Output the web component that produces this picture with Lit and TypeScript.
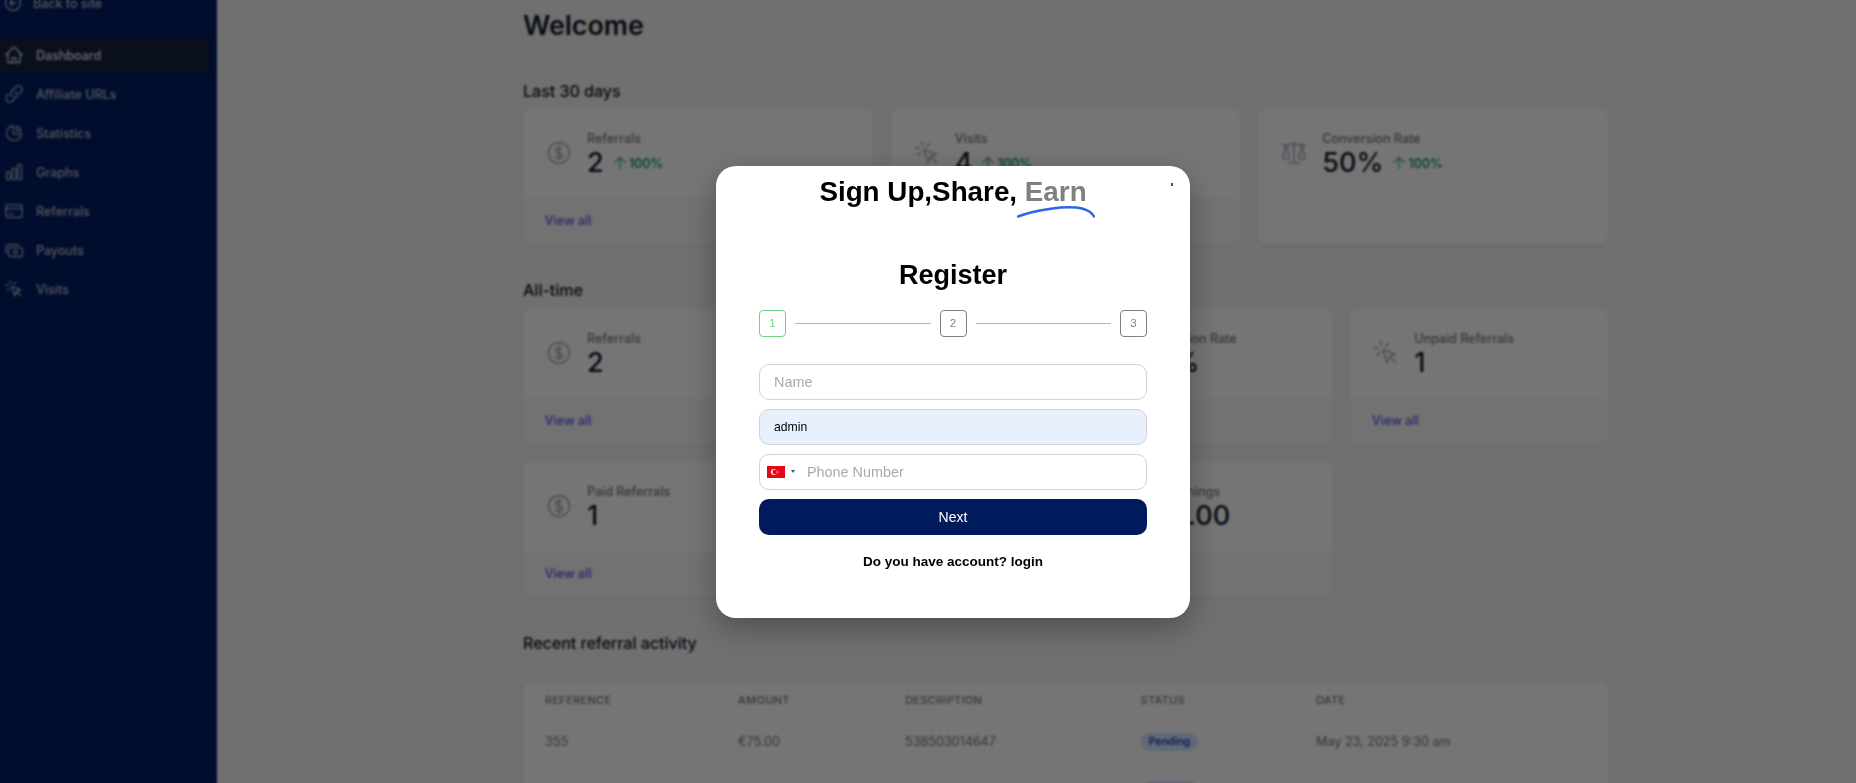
import { LitElement, html, css, svg } from "lit";
import { customElement } from "lit/decorators.js";

const ICONS: Record<string, string> = {
  back: "M11.25 9l-3 3m0 0l3 3m-3-3h7.5M21 12a9 9 0 11-18 0 9 9 0 0118 0z",
  home: "M2.25 12l8.954-8.955c.44-.439 1.152-.439 1.591 0L21.75 12M4.5 9.75v10.125c0 .621.504 1.125 1.125 1.125H9.75v-4.875c0-.621.504-1.125 1.125-1.125h2.25c.621 0 1.125.504 1.125 1.125V21h4.125c.621 0 1.125-.504 1.125-1.125V9.75M8.25 21h8.25",
  link: "M13.19 8.688a4.5 4.5 0 011.242 7.244l-4.5 4.5a4.5 4.5 0 01-6.364-6.364l1.757-1.757m13.35-.622l1.757-1.757a4.5 4.5 0 00-6.364-6.364l-4.5 4.5a4.5 4.5 0 001.242 7.244",
  pie: "M11 3.055A9.001 9.001 0 1020.945 13H11V3.055zM20.488 9H15V3.512A9.025 9.025 0 0120.488 9z",
  bars: "M3 13.125C3 12.504 3.504 12 4.125 12h2.25c.621 0 1.125.504 1.125 1.125v6.75C7.5 20.496 6.996 21 6.375 21h-2.25A1.125 1.125 0 013 19.875v-6.75zM9.75 8.625c0-.621.504-1.125 1.125-1.125h2.25c.621 0 1.125.504 1.125 1.125v11.25c0 .621-.504 1.125-1.125 1.125h-2.25a1.125 1.125 0 01-1.125-1.125V8.625zM16.5 4.125c0-.621.504-1.125 1.125-1.125h2.25C20.496 3 21 3.504 21 4.125v15.75c0 .621-.504 1.125-1.125 1.125h-2.25a1.125 1.125 0 01-1.125-1.125V4.125z",
  card: "M2.25 9h19.5M5.5 15.5h2m1.5 0h2M4.5 19.5h15a2.25 2.25 0 002.25-2.25V6.75A2.25 2.25 0 0019.5 4.5h-15a2.25 2.25 0 00-2.25 2.25v10.5A2.25 2.25 0 004.5 19.5z",
  payout: "M2.5 15.5V8A2.5 2.5 0 015 5.5h13M8 9h11.5A2.5 2.5 0 0122 11.5v6a2.5 2.5 0 01-2.5 2.5H8A2.5 2.5 0 015.5 17.5v-6A2.5 2.5 0 018 9zM16 14.5a2.2 2.2 0 11-4.4 0 2.2 2.2 0 014.4 0z",
  click: "M15 15l-2 5L9 9l11 4-5 2zm0 0l5 5M7.188 2.239l.777 2.897M5.136 7.965l-2.898-.777M13.95 4.05l-2.122 2.122m-5.657 5.656l-2.12 2.122",
  dollar: "M12 6v12m-3-2.818l.879.659c1.171.879 3.07.879 4.242 0 1.172-.879 1.172-2.303 0-3.182C13.536 12.219 12.768 12 12 12c-.725 0-1.45-.22-2.003-.659-1.106-.879-1.106-2.303 0-3.182s2.9-.879 4.006 0l.415.33M21 12a9 9 0 11-18 0 9 9 0 0118 0z",
  scale: "M12 3v17.25m0 0c-1.472 0-2.882.265-4.185.75M12 20.25c1.472 0 2.882.265 4.185.75M18.75 4.97A48.416 48.416 0 0012 4.5c-2.291 0-4.545.16-6.75.47m13.5 0c1.01.143 2.01.317 3 .52m-3-.52l2.62 10.726c.122.499-.106 1.028-.589 1.202a5.988 5.988 0 01-2.031.352 5.988 5.988 0 01-2.031-.352c-.483-.174-.711-.703-.59-1.202L18.75 4.97zm-16.5.52c.99-.203 1.99-.377 3-.52m0 0l2.62 10.726c.122.499-.106 1.028-.589 1.202a5.989 5.989 0 01-2.031.352 5.989 5.989 0 01-2.031-.352c-.483-.174-.711-.703-.59-1.202L5.25 4.97z",
  up: "M12 19.5v-15m0 0l-6.75 6.75M12 4.5l6.75 6.75",
};

const icon = (name: string, cls: string) => html`<svg class=${cls} viewBox="0 0 24 24" fill="none" stroke="currentColor" stroke-width="1.5" stroke-linecap="round" stroke-linejoin="round">${svg`<path d=${ICONS[name]}></path>`}</svg>`;

interface Stat { label: string; value?: string; icon?: string; trend?: boolean; footer?: boolean }

const NAV = [
  ["Dashboard", "home"], ["Affiliate URLs", "link"], ["Statistics", "pie"], ["Graphs", "bars"],
  ["Referrals", "card"], ["Payouts", "payout"], ["Visits", "click"],
];
const RECENT: Stat[] = [
  { label: "Referrals", value: "2", icon: "dollar", trend: true, footer: true },
  { label: "Visits", value: "4", icon: "click", trend: true, footer: true },
  { label: "Conversion Rate", value: "50%", icon: "scale", trend: true },
];
const ALL: Stat[] = [
  { label: "Referrals", value: "2", icon: "dollar", footer: true },
  { label: "Visits", value: "4", icon: "click", footer: true },
  { label: "Conversion Rate", value: "50%", icon: "scale", footer: true },
  { label: "Unpaid Referrals", value: "1", icon: "click", footer: true },
  { label: "Paid Referrals", value: "1", icon: "dollar", footer: true },
  { label: "", footer: true },
  { label: "Paid Earnings", value: "€75.00", icon: "dollar", footer: true },
];

@customElement("app-root")
export class AppRoot extends LitElement {
  static styles = css`
    :host { display: block; height: 100vh; overflow: hidden; font-family: Inter, "Noto Sans", sans-serif; position: relative; }
    * { box-sizing: border-box; }
    .shell { display: grid; grid-template-columns: 217px 1fr; height: 783px; overflow: hidden; background: #e0e0e0; }
    .side { background: #001a5b; font-size: 12.5px; font-weight: 500; }
    .back { display: flex; align-items: center; height: 20px; margin-top: -7px; padding-left: 3px; gap: 10px; color: #a8adb9; }
    .back-i { width: 20px; height: 20px; }
    .nav { margin-top: 24px; display: grid; grid-auto-rows: 36px; row-gap: 3px; width: 210px; }
    .item { display: flex; align-items: center; gap: 12px; padding-left: 4px; border-radius: 4px; color: #a8adb9; }
    .item.on { background: #141f3c; color: #d0d3d9; }
    .nav-i { width: 20px; height: 20px; flex: none; }
    .main { padding: 9px 248px 0 306px; color: #111827; }
    h1 { margin: 0; font-size: 26.8px; line-height: 32px; font-weight: 600; }
    .sec { font-size: 16px; line-height: 24px; font-weight: 500; margin: 0 0 6px; }
    .sec.a { margin-top: 38px; }
    .sec.b { margin-top: 34px; margin-bottom: 7px; }
    .sec.c { margin-top: 34px; margin-bottom: 28px; }
    .grid { display: grid; gap: 18px; }
    .g3 { grid-template-columns: repeat(3, 1fr); }
    .g4 { grid-template-columns: repeat(4, 1fr); }
    .stat { height: 135px; background: #ebebeb; border-radius: 8px; box-shadow: 0 1px 3px rgba(0,0,0,.08); display: grid; grid-template-rows: 1fr auto; overflow: hidden; }
    .body { display: flex; gap: 14px; padding: 20px 22px 0; }
    .stat-i { width: 28px; height: 28px; margin-top: 10px; color: #9ca3af; flex: none; }
    .lab { font-size: 12.5px; line-height: 20px; font-weight: 500; color: #6b7280; }
    .valrow { display: flex; align-items: baseline; gap: 7px; }
    .val { font-size: 27px; line-height: 30px; font-weight: 500; color: #111827; margin-top: -1px; }
    .trend { display: flex; align-items: center; gap: 0; color: #15936a; font-size: 12.5px; font-weight: 600; }
    .up-i { width: 18px; height: 18px; }
    .foot { height: 46px; background: #e2e5e2; padding: 0 21.5px 1px; display: flex; align-items: center; font-size: 12.7px; font-weight: 500; color: #5a52e0; }
    .table { margin-top: 0; background: #ebebeb; border-radius: 8px; box-shadow: 0 1px 3px rgba(0,0,0,.08); }
    .row { display: grid; grid-template-columns: 193px 167px 235.5px 175.5px 1fr; padding-left: 22px; align-items: center; }
    .head { height: 35px; font-size: 11px; letter-spacing: .3px; font-weight: 500; color: #6b7280; text-transform: uppercase; border-bottom: 1px solid #e2e2e2; }
    .line { height: 48px; font-size: 12.6px; color: #6b7280; border-bottom: 1px solid #e2e2e2; }
    .badge { display: inline-block; background: #bfd3ee; color: #1e40af; font-size: 10.5px; font-weight: 600; line-height: 18px; padding: 0 8px; border-radius: 9px; }
    .overlay { position: absolute; inset: 0; background: rgba(0,0,0,.5); backdrop-filter: blur(1px); display: flex; align-items: center; justify-content: center; padding-left: 50px; }
    .modal { position: relative; width: 474px; height: 452px; background: #fff; border-radius: 20px; padding: 10px 43px 0; box-shadow: 0 10px 30px rgba(0,0,0,.3); font-family: "Liberation Sans", Arial, sans-serif; color: #000; }
    .dot { position: absolute; left: 455px; top: 17px; width: 2px; height: 3px; background: #0a5fc4; }
    .title { margin: 0; text-align: center; font-size: 27.8px; line-height: 32px; font-weight: 700; white-space: nowrap; }
    .earn { position: relative; color: #808080; }
    .swoosh { position: absolute; left: -8px; top: 30px; width: 78px; height: 12px; }
    .reg { margin: 51px 0 0; text-align: center; font-size: 27px; line-height: 32px; font-weight: 700; }
    .steps { display: flex; align-items: center; gap: 9px; margin-top: 19px; }
    .step { width: 27px; height: 27px; border: 1px solid #808080; border-radius: 4px; display: flex; align-items: center; justify-content: center; font-size: 11.5px; color: #808080; flex: none; }
    .step.on { border-color: #6fd483; color: #6fd483; }
    .bar { flex: 1; height: 1px; background: #b3b3b3; }
    .form { display: grid; row-gap: 9px; margin-top: 27px; }
    .field { height: 36px; width: 100%; border: 1px solid #d2d2da; border-radius: 10px; background: #fff; padding: 0 14px; font: 14.4px "Liberation Sans", Arial, sans-serif; color: #000; outline: none; }
    .field::placeholder, .phone input::placeholder { color: #a9a9a9; opacity: 1; }
    .field.filled { background: #e8f0fe; font-size: 12.2px; }
    .phone { display: flex; align-items: center; padding: 0 0 0 7px; }
    .flag { width: 18px; height: 12px; flex: none; }
    .caret { width: 0; height: 0; border: 2.5px solid transparent; border-top: 3px solid #555; border-bottom: 0; margin-left: 6px; flex: none; }
    .phone input { flex: 1; min-width: 0; border: 0; background: none; outline: none; margin-left: 12px; padding: 0; font: inherit; color: #000; }
    .next { height: 36px; border: 0; border-radius: 10px; background: #001a5b; color: #fff; font: 14px "Liberation Sans", Arial, sans-serif; }
    .login { margin-top: 19px; text-align: center; font-size: 13.5px; line-height: 16px; font-weight: 700; }
  `;

  private renderStat(s: Stat) {
    return html`<div class="stat">
      <div class="body">
        ${s.icon ? icon(s.icon, "stat-i") : ""}
        <div>
          <div class="lab">${s.label}</div>
          <div class="valrow">
            <div class="val">${s.value}</div>
            ${s.trend ? html`<div class="trend">${icon("up", "up-i")}100%</div>` : ""}
          </div>
        </div>
      </div>
      ${s.footer ? html`<div class="foot">${s.label ? "View all" : ""}</div>` : ""}
    </div>`;
  }

  render() {
    return html`
      <div class="shell">
        <aside class="side">
          <div class="back">${icon("back", "back-i")}Back to site</div>
          <nav class="nav">
            ${NAV.map(([t, i], n) => html`<div class="item ${n === 0 ? "on" : ""}">${icon(i, "nav-i")}${t}</div>`)}
          </nav>
        </aside>
        <main class="main">
          <h1>Welcome</h1>
          <div class="sec a">Last 30 days</div>
          <div class="grid g3">${RECENT.map((s) => this.renderStat(s))}</div>
          <div class="sec b">All-time</div>
          <div class="grid g4">${ALL.map((s) => this.renderStat(s))}</div>
          <div class="sec c">Recent referral activity</div>
          <div class="table">
            <div class="row head"><div>Reference</div><div>Amount</div><div>Description</div><div>Status</div><div>Date</div></div>
            <div class="row line"><div>355</div><div>€75.00</div><div>538503014647</div><div><span class="badge">Pending</span></div><div>May 23, 2025 9:30 am</div></div>
            <div class="row line"><div></div><div></div><div></div><div><span class="badge">Pending</span></div><div></div></div>
          </div>
        </main>
      </div>
      <div class="overlay">
        <div class="modal">
          <span class="dot"></span>
          <h2 class="title">Sign Up,Share, <span class="earn">Earn<svg class="swoosh" viewBox="0 0 78 12" fill="none"><path d="M1 10.5C18 4 50-1 65 2.5c6 1.500 10 4.500 12 8" stroke="#2f66e8" stroke-width="2.500" stroke-linecap="round"></path></svg></span></h2>
          <h2 class="reg">Register</h2>
          <div class="steps">
            <div class="step on">1</div><div class="bar"></div>
            <div class="step">2</div><div class="bar"></div>
            <div class="step">3</div>
          </div>
          <div class="form">
            <input class="field" placeholder="Name" />
            <input class="field filled" .value=${"admin"} />
            <div class="field phone">
              <svg class="flag" viewBox="0 0 18 12"><rect width="18" height="12" fill="#e30a17"></rect><circle cx="7" cy="6" r="3" fill="#fff"></circle><circle cx="7.800" cy="6" r="2.400" fill="#e30a17"></circle><polygon points="11.800,6 9.700,5.300 10.500,7.100 10.500,4.900 9.700,6.700" fill="#fff"></polygon></svg>
              <span class="caret"></span>
              <input placeholder="Phone Number" />
            </div>
            <button class="next">Next</button>
          </div>
          <div class="login">Do you have account? login</div>
        </div>
      </div>
    `;
  }
}
